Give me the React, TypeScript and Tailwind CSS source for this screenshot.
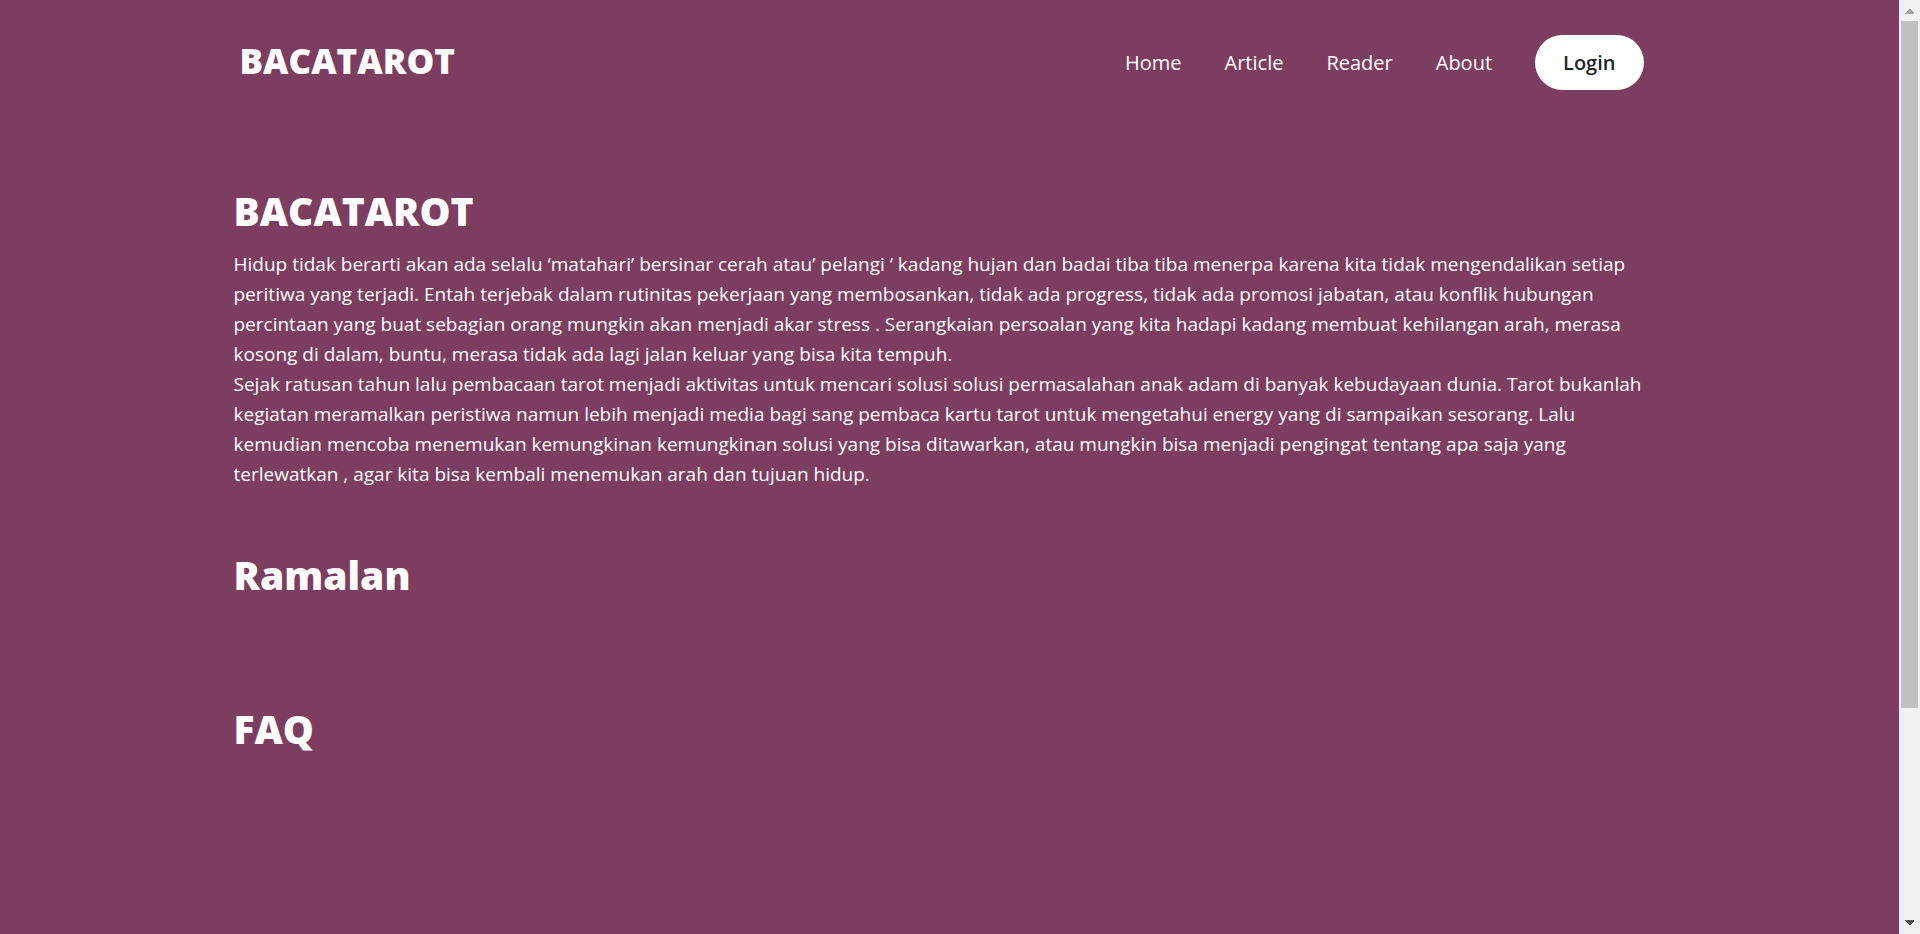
const navLinks = ['Home', 'Article', 'Reader', 'About'];

const introLines = [
  'Hidup tidak berarti akan ada selalu ‘matahari’ bersinar cerah atau’ pelangi ‘ kadang hujan dan badai tiba tiba menerpa karena kita tidak mengendalikan setiap',
  'peritiwa yang terjadi. Entah terjebak dalam rutinitas pekerjaan yang membosankan, tidak ada progress, tidak ada promosi jabatan, atau konflik hubungan',
  'percintaan yang buat sebagian orang mungkin akan menjadi akar stress . Serangkaian persoalan yang kita hadapi kadang membuat kehilangan arah, merasa',
  'kosong di dalam, buntu, merasa tidak ada lagi jalan keluar yang bisa kita tempuh.',
];

const historyLines = [
  'Sejak ratusan tahun lalu pembacaan tarot menjadi aktivitas untuk mencari solusi solusi permasalahan anak adam di banyak kebudayaan dunia. Tarot bukanlah',
  'kegiatan meramalkan peristiwa namun lebih menjadi media bagi sang pembaca kartu tarot untuk mengetahui energy yang di sampaikan sesorang. Lalu',
  'kemudian mencoba menemukan kemungkinan kemungkinan solusi yang bisa ditawarkan, atau mungkin bisa menjadi pengingat tentang apa saja yang',
  'terlewatkan , agar kita bisa kembali menemukan arah dan tujuan hidup.',
];

function Paragraph({ lines }: { lines: string[] }) {
  return (
    <p>
      {lines.map((line) => (
        <span key={line} className="block">
          {line}{' '}
        </span>
      ))}
    </p>
  );
}

function Heading({ children }: { children: string }) {
  return <h2 className="text-[39px] leading-[48px] font-extrabold">{children}</h2>;
}

function Scrollbar() {
  return (
    <div
      aria-hidden="true"
      className="sticky top-0 flex h-screen w-[21px] shrink-0 flex-col items-center justify-between bg-[#f1f1f1]"
    >
      <svg className="h-[21px] w-[21px] shrink-0" viewBox="0 0 21 21" shapeRendering="crispEdges">
        <path d="M6 14v-1l4-4h1l4 4v1z" fill="#a3a3a3" />
      </svg>
      <div className="w-full flex-1 px-[2px]">
        <div className="h-[77%] bg-[#c1c1c1]" />
      </div>
      <svg className="h-[21px] w-[21px] shrink-0" viewBox="0 0 21 21" shapeRendering="crispEdges">
        <path d="M6 7v1l4 4h1l4-4v-1z" fill="#505050" />
      </svg>
    </div>
  );
}

export default function App() {
  return (
    <div className="flex min-h-screen bg-[#7d3d60] font-['Open_Sans',sans-serif] text-[19px] leading-[30px] text-white">
      <div className="min-w-0 flex-1">
        <div className="mx-auto max-w-[1432px]">
          <header className="flex items-center justify-between py-[35px] pr-[22px] pl-[6px]">
            <a href="#" className="pb-1 text-[35px] leading-[48px] font-extrabold">
              BACATAROT
            </a>
            <nav className="flex items-center gap-[43px] text-[20px]">
              {navLinks.map((label) => (
                <a key={label} href={`#${label.toLowerCase()}`}>
                  {label}
                </a>
              ))}
              <button
                type="button"
                className="h-[55px] rounded-full bg-white px-[28px] font-semibold text-[#212529]"
              >
                Login
              </button>
            </nav>
          </header>
          <main className="flex flex-col pt-[62px]">
            <section>
              <Heading>BACATAROT</Heading>
              <div className="pt-[14px] whitespace-nowrap">
                <Paragraph lines={introLines} />
                <Paragraph lines={historyLines} />
              </div>
            </section>
            <section className="pt-[62px]">
              <Heading>Ramalan</Heading>
            </section>
            <section className="pt-[106px]">
              <Heading>FAQ</Heading>
            </section>
          </main>
        </div>
      </div>
      <Scrollbar />
    </div>
  );
}
